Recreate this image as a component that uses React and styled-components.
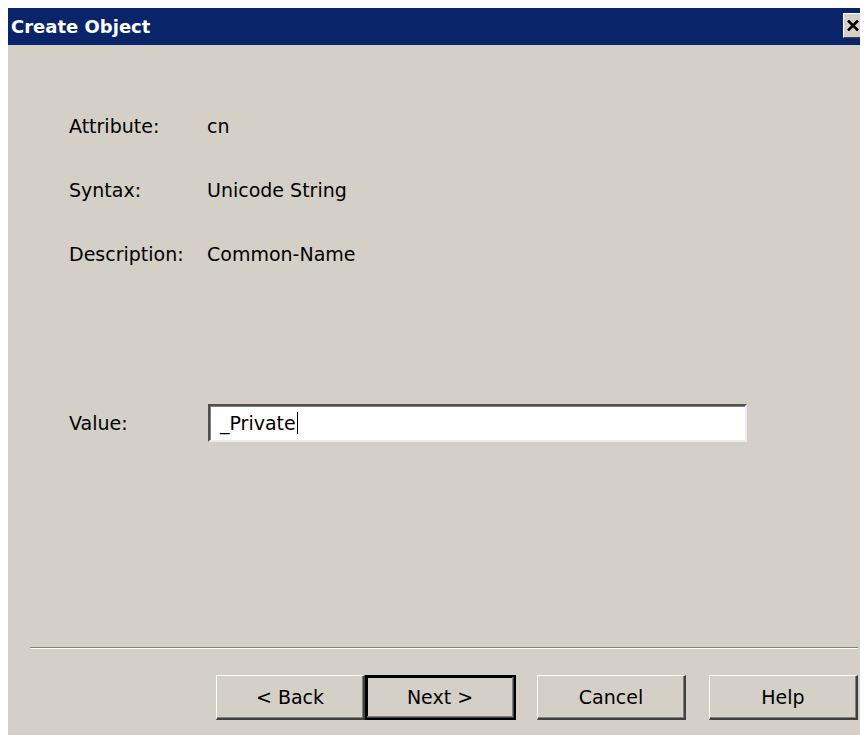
import React from "react";
import styled, { createGlobalStyle } from "styled-components";

const GlobalStyle = createGlobalStyle`
  body {
    margin: 8px;
    background: #ffffff;
    overflow: hidden;
    font-family: "DejaVu Sans", Verdana, sans-serif;
  }
`;

const Dialog = styled.div`
  width: 862px;
  height: 727px;
  background: #d4d0c8;
  display: flex;
  flex-direction: column;
  color: #000;
  font-size: 19px;
`;

const TitleBar = styled.div`
  height: 37px;
  background: #0a246a;
  display: flex;
  align-items: center;
  justify-content: space-between;
  padding-left: 3px;
`;

const Title = styled.span`
  color: #ffffff;
  font-weight: bold;
  font-size: 18px;
`;

const CloseButton = styled.div`
  width: 27px;
  height: 25px;
  box-sizing: border-box;
  align-self: flex-start;
  margin-top: 5px;
  background: #d4d0c8;
  border-top: 1px solid #ffffff;
  border-left: 1px solid #ffffff;
  border-bottom: 1px solid #404040;
  display: flex;
  align-items: center;
  padding-left: 3px;
`;

const Fields = styled.div`
  display: grid;
  grid-template-columns: 138px 1fr;
  grid-auto-rows: 64px;
  align-items: center;
  padding: 49px 0 0 61px;
`;

const Label = styled.span``;

const Value = styled.span``;

const ValueRow = styled.div`
  display: grid;
  grid-template-columns: 139px 539px;
  align-items: center;
  margin: 118px 0 0 61px;
`;

const TextBox = styled.div`
  height: 38px;
  box-sizing: border-box;
  background: #ffffff;
  border-top: 2px solid #505050;
  border-left: 2px solid #505050;
  border-bottom: 2px solid #ececec;
  border-right: 2px solid #ececec;
  box-shadow: inset 1px 1px 0 #808080;
  display: flex;
  align-items: center;
  padding-left: 10px;
`;

const Caret = styled.span`
  display: inline-block;
  width: 1px;
  height: 22px;
  background: #000;
  margin-left: 1px;
`;

const Separator = styled.div`
  margin: 205px 12px 0 22px;
  height: 1px;
  background: #808080;
  border-bottom: 1px solid #ffffff;
`;

const ButtonRow = styled.div`
  display: flex;
  justify-content: flex-end;
  padding-right: 12px;
  margin-top: 26px;
`;

const Button = styled.div`
  width: ${(p) => (p.$primary ? 151 : 149)}px;
  height: 45px;
  box-sizing: border-box;
  margin-left: ${(p) => p.$gap || 0}px;
  display: flex;
  align-items: center;
  justify-content: center;
  background: #d4d0c8;
  border-top: 1px solid #ffffff;
  border-left: 1px solid #ffffff;
  border-bottom: 2px solid #404040;
  border-right: 2px solid #404040;
  box-shadow: inset -1px -1px 0 #808080;
  ${(p) =>
    p.$primary &&
    `
    outline: 2px solid #000;
    outline-offset: -2px;
    border-top-color: #ffffff;
    box-shadow: inset 2px 2px 0 #000, inset -1px -1px 0 #808080;
    border: 1px solid #000;
    border-bottom: 2px solid #000;
    border-right: 2px solid #000;
  `}
`;

const PrimaryFrame = styled.div`
  width: 100%;
  height: 100%;
  box-sizing: border-box;
  display: flex;
  align-items: center;
  justify-content: center;
  border-top: 1px solid #ffffff;
  border-left: 1px solid #ffffff;
  border-bottom: 1px solid #404040;
  border-right: 1px solid #404040;
  box-shadow: inset -1px -1px 0 #808080;
`;

const fields = [
  ["Attribute:", "cn"],
  ["Syntax:", "Unicode String"],
  ["Description:", "Common-Name"],
];

export default function App() {
  return (
    <>
      <GlobalStyle />
      <Dialog>
        <TitleBar>
          <Title>Create Object</Title>
          <CloseButton>
            <svg width="12" height="11" viewBox="0 0 12 11">
              <path d="M1 0.5 L11 10.5 M11 0.5 L1 10.5" stroke="#000" strokeWidth="2.6" />
            </svg>
          </CloseButton>
        </TitleBar>

        <Fields>
          {fields.map(([label, value]) => (
            <React.Fragment key={label}>
              <Label>{label}</Label>
              <Value>{value}</Value>
            </React.Fragment>
          ))}
        </Fields>

        <ValueRow>
          <Label>Value:</Label>
          <TextBox>
            _Private
            <Caret />
          </TextBox>
        </ValueRow>

        <Separator />

        <ButtonRow>
          <Button>&lt; Back</Button>
          <Button $primary>
            <PrimaryFrame>Next &gt;</PrimaryFrame>
          </Button>
          <Button $gap={21}>Cancel</Button>
          <Button $gap={23}>Help</Button>
        </ButtonRow>
      </Dialog>
    </>
  );
}
